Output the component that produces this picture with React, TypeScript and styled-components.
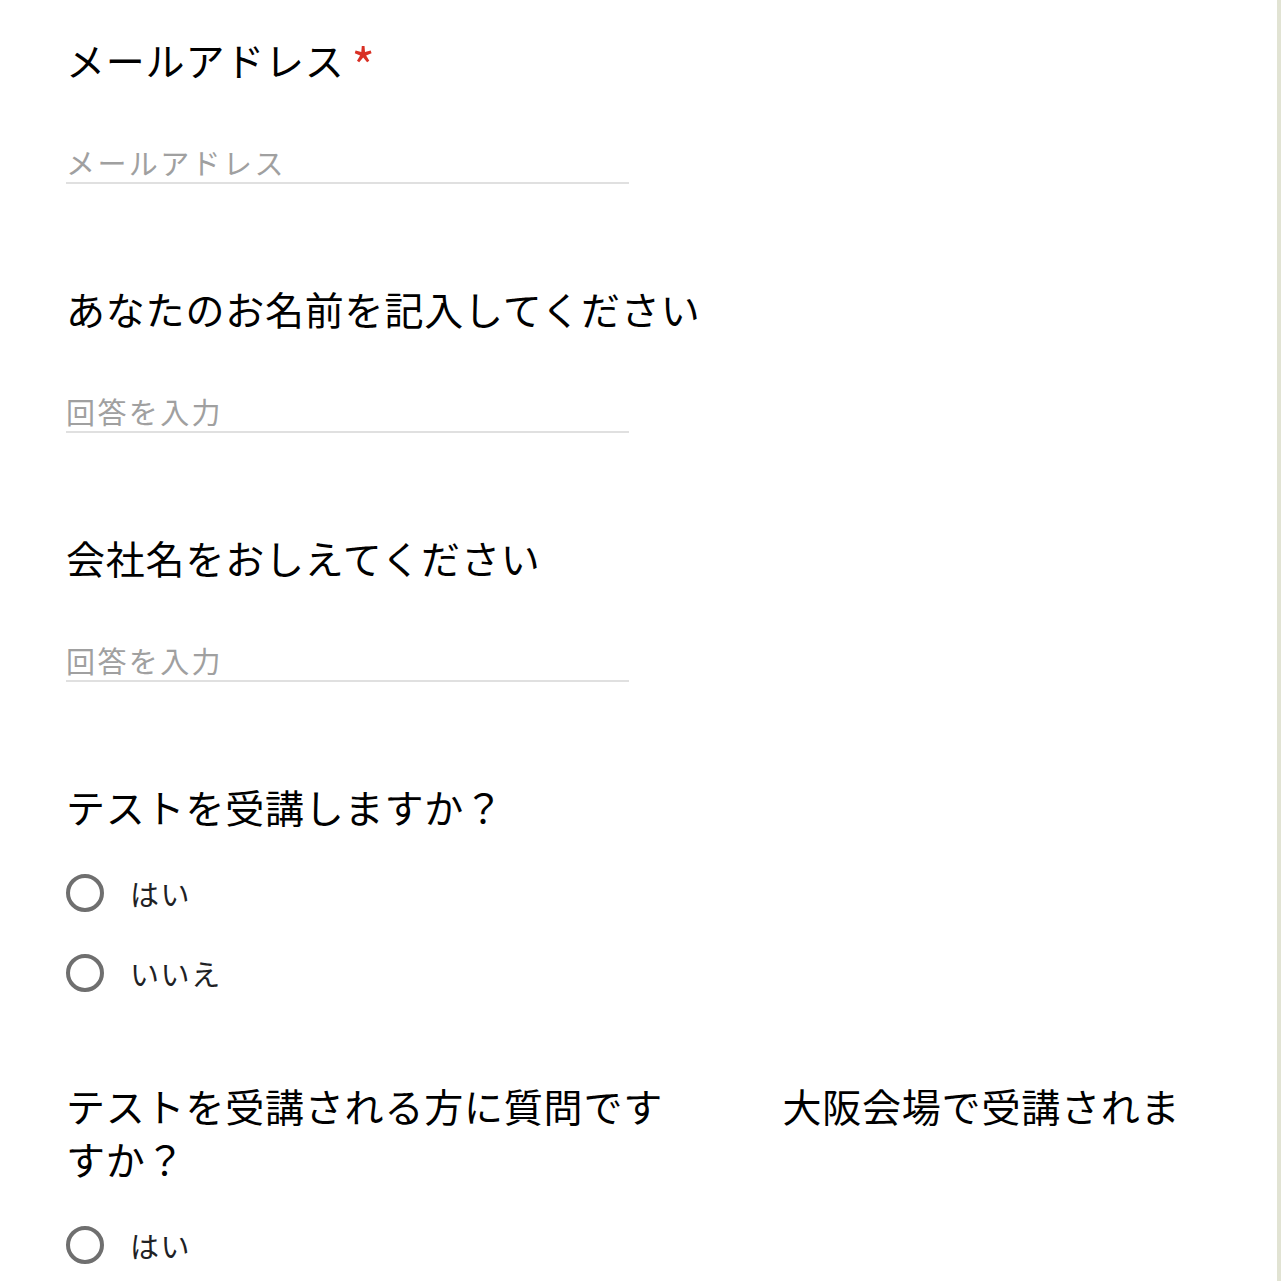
import { FC } from "react";
import styled, { createGlobalStyle } from "styled-components";

const GlobalStyle = createGlobalStyle`
  html, body {
    margin: 0;
    padding: 0;
    background: #ffffff;
  }
  body {
    font-family: "Noto Sans CJK JP", "Noto Sans", sans-serif;
    color: #000000;
  }
`;

const Page = styled.div`
  display: flex;
  min-height: 100vh;
  overflow: hidden;
`;

const Form = styled.main`
  flex: 1;
  padding: 33px 0 0 66px;
  display: flex;
  flex-direction: column;
`;

const Rail = styled.div`
  width: 4px;
  flex: none;
  background: #e1e3d3;
`;

const Question = styled.section<{ gapAfter: number }>`
  display: flex;
  flex-direction: column;
  margin-bottom: ${(p) => p.gapAfter}px;
`;

const Title = styled.h2`
  margin: 0;
  width: 1130px;
  font-size: 39px;
  font-weight: 400;
  line-height: 53px;
  letter-spacing: 0.8px;
  color: #000000;
`;

const Required = styled.span`
  display: inline-block;
  margin-left: 7px;
  font-size: 50px;
  line-height: 0;
  vertical-align: -10px;
  color: #d93025;
`;

const TextInput = styled.input`
  margin-top: 56px;
  width: 563px;
  height: 40px;
  padding: 0;
  border: none;
  border-bottom: 2px solid #e0e0e0;
  outline: none;
  background: transparent;
  font-family: inherit;
  font-size: 29px;
  letter-spacing: 2.4px;
  color: #202124;
  &::placeholder {
    color: #a0a0a0;
  }
`;

const Options = styled.div`
  margin-top: 36px;
  display: flex;
  flex-direction: column;
  gap: 32px;
`;

const OptionRow = styled.label`
  display: flex;
  align-items: center;
  gap: 26px;
  height: 48px;
  cursor: pointer;
`;

const RadioCircle = styled.span`
  width: 38px;
  height: 38px;
  box-sizing: border-box;
  border: 4px solid #6f6f6f;
  border-radius: 50%;
  flex: none;
`;

const OptionText = styled.span`
  font-size: 29px;
  letter-spacing: 1.6px;
  color: #202124;
`;

interface IChoice {
  title: string;
  options: string[];
  gapAfter: number;
}

const Choice: FC<IChoice> = ({ title, options, gapAfter }) => (
  <Question gapAfter={gapAfter}>
    <Title>{title}</Title>
    <Options>
      {options.map((o) => (
        <OptionRow key={o}>
          <RadioCircle />
          <OptionText>{o}</OptionText>
        </OptionRow>
      ))}
    </Options>
  </Question>
);

const App: FC = () => {
  return (
    <Page>
      <GlobalStyle />
      <Form>
        <Question gapAfter={98}>
          <Title>
            メールアドレス<Required>*</Required>
          </Title>
          <TextInput placeholder="メールアドレス" />
        </Question>
        <Question gapAfter={98}>
          <Title>あなたのお名前を記入してください</Title>
          <TextInput placeholder="回答を入力" />
        </Question>
        <Question gapAfter={98}>
          <Title>会社名をおしえてください</Title>
          <TextInput placeholder="回答を入力" />
        </Question>
        <Choice title="テストを受講しますか？" options={["はい", "いいえ"]} gapAfter={82} />
        <Choice
          title="テストを受講される方に質問です　　　大阪会場で受講されますか？"
          options={["はい", "いいえ"]}
          gapAfter={84}
        />
      </Form>
      <Rail />
    </Page>
  );
};

export default App;
